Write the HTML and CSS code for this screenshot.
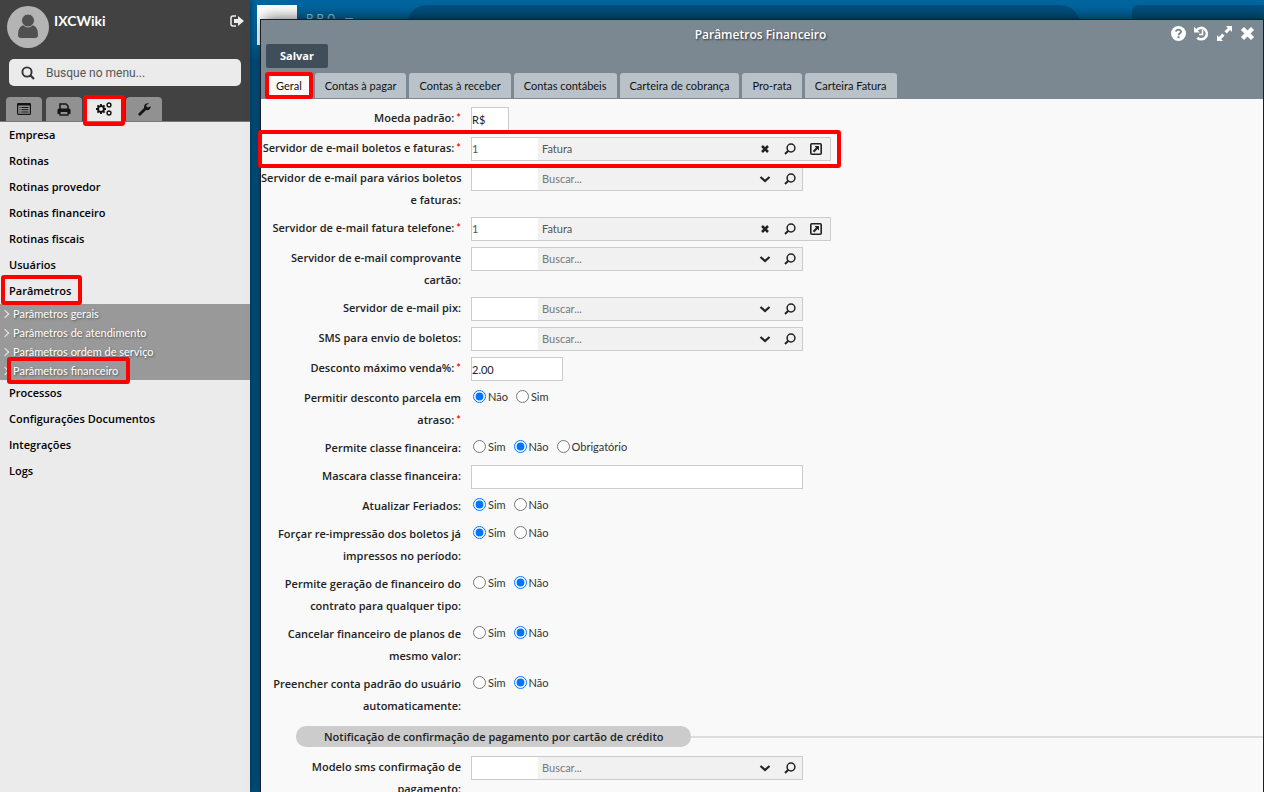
FILE: index.html
```html
<!DOCTYPE html>
<html lang="pt-BR">
<head>
<meta charset="utf-8">
<title>Parâmetros Financeiro</title>
<link rel="stylesheet" href="styles.css">
<script src="app.js" defer></script>
</head>
<body>
<svg class="defs" aria-hidden="true">
  <symbol id="i-down" viewBox="0 0 12 12"><path d="M1.500 4l4.500 4 4.500-4" fill="none" stroke="currentColor" stroke-width="2.200"/></symbol>
  <symbol id="i-x" viewBox="0 0 12 12"><path d="M3 3l6 6M9 3l-6 6" fill="none" stroke="currentColor" stroke-width="2.600"/></symbol>
  <symbol id="i-find" viewBox="0 0 12 12"><circle cx="7" cy="5" r="3.900" fill="none" stroke="currentColor" stroke-width="1.500"/><path d="M4.300 7.700L1 11" stroke="currentColor" stroke-width="2"/></symbol>
  <symbol id="i-open" viewBox="0 0 12 12"><rect x=".8" y=".8" width="10.400" height="10.400" rx="1" fill="none" stroke="currentColor" stroke-width="1.600"/><path d="M4.500 3H9v4.500L7.600 6.100 4.300 9.400 2.800 7.900 6 4.600z" fill="currentColor"/></symbol>
  <symbol id="i-gear" viewBox="0 0 24 24"><circle cx="12" cy="12" r="7" fill="none" stroke="currentColor" stroke-width="4.500"/><path d="M12 0v5M12 19v5M0 12h5M19 12h5M3.500 3.500L7 7M17 17l3.500 3.500M20.500 3.500L17 7M7 17l-3.500 3.500" stroke="currentColor" stroke-width="4.500"/></symbol>
</svg>
<div class="desktop">
  <aside class="sidebar">
    <header class="side-head">
      <div class="profile">
        <svg class="avatar" viewBox="0 0 42 42" aria-hidden="true"><circle cx="21" cy="21" r="21" fill="#b4b4b4"/><path d="M17 19c-5 1-6 6-6 10q0 3 3 3h14q3 0 3-3c0-4-1-9-6-10z" fill="#505050"/><circle cx="21" cy="14.500" r="6.500" fill="#505050" stroke="#b4b4b4"/></svg>
        <strong class="user">IXCWiki</strong>
        <button class="icon-btn" aria-label="Sair"><svg width="14" height="12" viewBox="0 0 14 12"><path d="M6 1H3Q1 1 1 3v6q0 2 2 2h3" fill="none" stroke="#eee" stroke-width="1.500"/><path d="M4 4h4V1l6 5-6 5V8H4z" fill="#eee"/></svg></button>
      </div>
      <label class="search"><svg width="14" height="14" viewBox="0 0 14 14" aria-hidden="true"><circle cx="6" cy="6" r="4.600" fill="none" stroke="#333" stroke-width="1.900"/><path d="M9.300 9.300L13 13" stroke="#333" stroke-width="2.200"/></svg><input type="text" aria-label="Busque no menu" placeholder="Busque no menu..."></label>
      <nav class="side-tabs">
        <button aria-label="Menu"><svg width="14" height="12" viewBox="0 0 14 12"><rect x=".6" y=".6" width="12.800" height="10.800" rx="1" fill="none" stroke="#151515" stroke-width="1.200"/><path d="M0 1.500h14" stroke="#151515" stroke-width="2"/><path d="M2.500 4.500h1M2.500 6.700h1M2.500 9h1M4.500 4.500h7M4.500 6.700h7M4.500 9h7" stroke="#151515"/></svg></button>
        <button aria-label="Imprimir"><svg width="14" height="13" viewBox="0 0 14 13"><path d="M3 6V1h6l2 2v3" fill="none" stroke="#151515" stroke-width="1.500"/><path d="M2 5.500h10q1.500 0 1.500 1.500v4H11V9H3v2H.5V7Q.5 5.500 2 5.500z" fill="#151515"/><path d="M3 9v3h8V9" fill="none" stroke="#151515" stroke-width="1.300"/></svg></button>
        <button class="active" aria-label="Configurações"><svg width="16" height="14" viewBox="0 0 16 14"><use href="#i-gear" x="0" y="2" width="10" height="10"/><use href="#i-gear" x="10" y="0" width="6" height="6"/><use href="#i-gear" x="10" y="8" width="6" height="6"/></svg><span class="mark"></span></button>
        <button aria-label="Ferramentas"><svg width="13" height="13" viewBox="0 0 13 13"><path d="M1.800 11.200L7.500 5.500" stroke="#151515" stroke-width="2.800" stroke-linecap="round"/><path d="M12.500 3.200L10 4.600 8.400 3.600V2L11 .4C8.500-.4 6 1.200 6 3.800s2 3.700 3.800 3.400c2-.3 3.200-2 2.700-4z" fill="#151515"/></svg></button>
      </nav>
    </header>
    <ul class="menu">
      <li><a href="#">Empresa</a></li>
      <li><a href="#">Rotinas</a></li>
      <li><a href="#">Rotinas provedor</a></li>
      <li><a href="#">Rotinas financeiro</a></li>
      <li><a href="#">Rotinas fiscais</a></li>
      <li><a href="#">Usuários</a></li>
      <li><a href="#" class="marked">Parâmetros<span class="mark"></span></a>
        <ul class="submenu">
          <li><a href="#">Parâmetros gerais</a></li>
          <li><a href="#">Parâmetros de atendimento</a></li>
          <li><a href="#">Parâmetros ordem de serviço</a></li>
          <li><a href="#" class="marked">Parâmetros financeiro<span class="mark"></span></a></li>
        </ul>
      </li>
      <li><a href="#">Processos</a></li>
      <li><a href="#">Configurações Documentos</a></li>
      <li><a href="#">Integrações</a></li>
      <li><a href="#">Logs</a></li>
    </ul>
  </aside>
  <div class="workspace">
    <div class="backdrop"><div class="logo"></div><div class="brand">BBO —</div><div class="panel wide"></div><div class="panel side"></div></div>
    <section class="window">
      <header class="win-head">
        <div class="title-bar">
          <h1>Parâmetros Financeiro</h1>
          <div class="win-actions">
            <button class="icon-btn" aria-label="Ajuda"><svg width="15" height="15" viewBox="0 0 15 15"><circle cx="7.500" cy="7.500" r="7.500" fill="#fff"/><path d="M5 5.600Q5.300 3.700 7.500 3.700T10 5.700C10 7.200 7.600 7.200 7.600 9.200" fill="none" stroke="#7b8891" stroke-width="1.900"/><rect x="6.600" y="10.200" width="2" height="2" fill="#7b8891"/></svg></button>
            <button class="icon-btn" aria-label="Histórico"><svg width="15" height="15" viewBox="0 0 15 15"><path d="M2.600 4.200A5.700 5.700 0 1 1 3.300 11.800" fill="none" stroke="#fff" stroke-width="2.600"/><path d="M0 .8L0 6.500h5.800z" fill="#fff"/><path d="M8.500 4v4.500H5" fill="none" stroke="#fff" stroke-width="1.600"/></svg></button>
            <button class="icon-btn" aria-label="Maximizar"><svg width="15" height="15" viewBox="0 0 15 15"><path d="M9 0h6v6l-1.900-1.900-3.400 3.400-2.200-2.200 3.400-3.400zM6 15H0V9l1.900 1.900 3.400-3.400 2.200 2.200-3.400 3.400z" fill="#fff"/></svg></button>
            <button class="icon-btn" aria-label="Fechar"><svg width="15" height="15" viewBox="0 0 15 15"><path d="M4 4l7 7M11 4l-7 7" stroke="#fff" stroke-width="4.400" stroke-linecap="square"/></svg></button>
          </div>
        </div>
        <button class="save">Salvar</button>
        <nav class="tabs">
          <button class="active">Geral<span class="mark"></span></button>
          <button>Contas à pagar</button>
          <button>Contas à receber</button>
          <button>Contas contábeis</button>
          <button>Carteira de cobrança</button>
          <button>Pro-rata</button>
          <button>Carteira Fatura</button>
        </nav>
      </header>
      <form class="form">
        <div class="row"><label for="moeda">Moeda padrão:<em>*</em></label><input id="moeda" class="text short" type="text" value="R$"></div>
        <div class="row marked"><label for="srv-boleto">Servidor de e-mail boletos e faturas:<em>*</em></label><div class="lookup" data-id="srv-boleto" data-code="1" data-text="Fatura"></div><span class="mark"></span></div>
        <div class="row"><label for="srv-varios">Servidor de e-mail para vários boletos<br>e faturas:</label><div class="lookup" data-id="srv-varios"></div></div>
        <div class="row"><label for="srv-tel">Servidor de e-mail fatura telefone:<em>*</em></label><div class="lookup" data-id="srv-tel" data-code="1" data-text="Fatura"></div></div>
        <div class="row"><label for="srv-cartao">Servidor de e-mail comprovante<br>cartão:</label><div class="lookup" data-id="srv-cartao"></div></div>
        <div class="row"><label for="srv-pix">Servidor de e-mail pix:</label><div class="lookup" data-id="srv-pix"></div></div>
        <div class="row"><label for="sms">SMS para envio de boletos:</label><div class="lookup" data-id="sms"></div></div>
        <div class="row"><label for="desconto">Desconto máximo venda%:<em>*</em></label><input id="desconto" class="text medium" type="text" value="2.00"></div>
        <div class="row" role="radiogroup" aria-labelledby="l1"><span class="label" id="l1">Permitir desconto parcela em<br>atraso:<em>*</em></span><div class="radios"><label><input type="radio" name="r1" checked>Não</label><label><input type="radio" name="r1">Sim</label></div></div>
        <div class="row" role="radiogroup" aria-labelledby="l2"><span class="label" id="l2">Permite classe financeira:</span><div class="radios"><label><input type="radio" name="r2">Sim</label><label><input type="radio" name="r2" checked>Não</label><label><input type="radio" name="r2">Obrigatório</label></div></div>
        <div class="row"><label for="mascara">Mascara classe financeira:</label><input id="mascara" class="text long" type="text"></div>
        <div class="row" role="radiogroup" aria-labelledby="l3"><span class="label" id="l3">Atualizar Feriados:</span><div class="radios"><label><input type="radio" name="r3" checked>Sim</label><label><input type="radio" name="r3">Não</label></div></div>
        <div class="row" role="radiogroup" aria-labelledby="l4"><span class="label" id="l4">Forçar re-impressão dos boletos já<br>impressos no período:</span><div class="radios"><label><input type="radio" name="r4" checked>Sim</label><label><input type="radio" name="r4">Não</label></div></div>
        <div class="row" role="radiogroup" aria-labelledby="l5"><span class="label" id="l5">Permite geração de financeiro do<br>contrato para qualquer tipo:</span><div class="radios"><label><input type="radio" name="r5">Sim</label><label><input type="radio" name="r5" checked>Não</label></div></div>
        <div class="row" role="radiogroup" aria-labelledby="l6"><span class="label" id="l6">Cancelar financeiro de planos de<br>mesmo valor:</span><div class="radios"><label><input type="radio" name="r6">Sim</label><label><input type="radio" name="r6" checked>Não</label></div></div>
        <div class="row" role="radiogroup" aria-labelledby="l7"><span class="label" id="l7">Preencher conta padrão do usuário<br>automaticamente:</span><div class="radios"><label><input type="radio" name="r7">Sim</label><label><input type="radio" name="r7" checked>Não</label></div></div>
        <h2 class="section"><span>Notificação de confirmação de pagamento por cartão de crédito</span></h2>
        <div class="row"><label for="modelo">Modelo sms confirmação de<br>pagamento:</label><div class="lookup" data-id="modelo"></div></div>
      </form>
    </section>
  </div>
</div>
</body>
</html>
```
FILE: app.js
```js
// Builds each lookup field: code box, description box and action buttons.
const button = (label, icon) =>
  `<button type="button" aria-label="${label}"><svg class="${icon}" aria-hidden="true"><use href="#${icon}"/></svg></button>`;

document.querySelectorAll('.lookup').forEach((el) => {
  const { id, code = '', text = '' } = el.dataset;
  el.innerHTML =
    `<input class="code" id="${id}" type="text" value="${code}">` +
    `<input class="desc" type="text" aria-label="Descrição" placeholder="Buscar..." value="${text}">` +
    (code ? button('Limpar', 'i-x') : button('Abrir lista', 'i-down')) +
    button('Pesquisar', 'i-find') +
    (code ? button('Abrir cadastro', 'i-open') : '');
  if (code) el.classList.add('filled');
});
```
FILE: styles.css
```css
* { box-sizing: border-box; }
body {
  margin: 0;
  font: 11px/22px Lato, "Noto Sans", sans-serif;
  color: #222;
}
button, input { font: inherit; color: inherit; }
button { border: 0; padding: 0; background: none; }
ul { list-style: none; margin: 0; padding: 0; }
a { color: inherit; text-decoration: none; }
svg { display: block; }
.defs { display: none; }

.desktop {
  display: flex;
  height: 100vh;
  overflow: hidden;
  background: linear-gradient(#00659e, #00659e 40px, #00507f 60px);
}

/* Strong text */
.menu, .title-bar h1, .row > label, .label, .section {
  font-family: "Open Sans", "Noto Sans", sans-serif;
  font-weight: 600;
}
.save { font-family: "Open Sans", "Noto Sans", sans-serif; font-weight: 700; }

/* Red highlight frames */
.mark {
  position: absolute;
  border: 4px solid #f00;
  border-radius: 3px;
  pointer-events: none;
  z-index: 5;
}

/* Sidebar */
.sidebar {
  flex: 0 0 250px;
  background: #ebebeb;
  box-shadow: 0 0 6px #002a45;
  z-index: 1;
}
.side-head {
  padding: 6px 6px 0;
  background: #424242;
  border-bottom: 1px solid #777;
}
.profile { display: flex; align-items: flex-start; gap: 5px; padding: 0 0 11px 1px; }
.avatar { width: 42px; height: 42px; }
.user { flex: 1; font-size: 14px; line-height: 30px; color: #fff; }
.profile .icon-btn { margin-top: 9px; }
.search {
  display: flex;
  align-items: center;
  gap: 11px;
  height: 27px;
  margin: 0 3px 11px;
  padding: 0 12px;
  border-radius: 5px;
  background: #ebebeb;
}
.search input {
  flex: 1;
  min-width: 0;
  border: 0;
  padding: 0;
  background: none;
  outline: 0;
  font-family: Roboto, sans-serif;
  font-size: 12px;
  color: #444;
}
.search input::placeholder { color: #555; opacity: 1; }
.side-tabs { display: flex; gap: 4px; }
.side-tabs button {
  position: relative;
  display: grid;
  place-items: center;
  width: 36px;
  height: 24px;
  border-radius: 4px 4px 0 0;
  background: #919191;
  color: #111;
}
.side-tabs .active { background: #ebebeb; }
.side-tabs .mark { inset: -2px -3px -5px; }
.menu { color: #000; }
.menu a { display: block; padding-left: 9px; line-height: 26px; }
.menu .marked { position: relative; width: max-content; }
.menu .marked .mark { inset: -3px -11px -1px 1px; }
.menu .submenu { background: #999; color: #fff; font-family: Lato, sans-serif; font-weight: 400; text-shadow: 1px 1px 2px #555; }
.menu .submenu a { padding-left: 13px; line-height: 19px; }
.submenu li { position: relative; }
.submenu li::before {
  content: "";
  position: absolute;
  left: 2px;
  top: 7px;
  width: 5px;
  height: 5px;
  border: solid #eee;
  border-width: 1px 1px 0 0;
  transform: rotate(45deg);
}
.menu .submenu .marked .mark { inset: -4px -12px -4px 7px; }

/* Desktop behind the window */
.workspace { position: relative; flex: 1; min-width: 0; padding: 19px 0 0 10px; display: flex; z-index: 2; }
.backdrop { position: absolute; inset: 5px 0 0 7px; display: flex; }
.logo { width: 40px; height: 40px; background: #fff; }
.brand { width: 110px; padding: 3px 0 0 9px; font-family: Roboto, sans-serif; font-size: 12px; letter-spacing: 3px; color: #9cc; }
.panel { background: #00507f; height: 400px; }
.wide { flex: 1; border-radius: 20px; margin-right: 52px; }
.side { width: 132px; border-radius: 6px 0 0; }

/* Window */
.window {
  position: relative;
  flex: 1;
  min-width: 0;
  display: flex;
  flex-direction: column;
  border: 1px solid #17202a;
  border-bottom: 0;
  background: #f9f9f9;
  box-shadow: 4px 0 14px #000a;
}
.win-head { background: #7b8891; padding: 0 5px; }
.title-bar { display: grid; grid-template-columns: 1fr auto 1fr; height: 24px; padding: 4px 3px 0 0; }
.title-bar h1 { grid-column: 2; margin: 0; font-size: 12px; line-height: 22px; color: #fff; text-shadow: 1px 1px 2px #333; }
.win-actions { display: flex; gap: 8px; justify-content: flex-end; align-items: flex-start; padding-top: 2px; }
.save { display: block; width: 62px; height: 24px; margin-bottom: 5px; border-radius: 2px; background: #3f4e59; color: #fff; }
.tabs { display: flex; gap: 3px; padding-bottom: 1px; }
.tabs button { position: relative; height: 25px; padding: 0 10px; border-radius: 3px 3px 0 0; background: #bac2c9; color: #111; white-space: nowrap; }
.tabs .active { background: #f9f9f9; }
.tabs .mark { inset: -1px -1px; }

/* Form */
.form { flex: 1; min-height: 0; padding-top: 8px; }
.row { position: relative; display: flex; align-items: flex-start; gap: 10px; margin-bottom: 6px; }
.row > label, .label { width: 200px; flex: none; text-align: right; white-space: nowrap; }
em { margin-left: 2px; font-family: Lato, sans-serif; font-style: normal; color: #e00; }
.text, .lookup { height: 24px; border: 1px solid #ccc; background: #fff; }
.text { padding: 0; }
.short { width: 38px; }
.medium { width: 92px; }
.long { width: 332px; }
.lookup { display: flex; width: 332px; background: #f1f1f1; }
.filled { width: 360px; }
.lookup input { border: 0; min-width: 0; outline: 0; color: #555; padding: 0; }
.lookup .code { width: 66px; background: #fff; }
.lookup .desc { flex: 1; background: none; padding-left: 4px; }
.desc::placeholder { color: #777; opacity: 1; }
.lookup button { width: 25px; display: grid; place-items: center; color: #222; }
.lookup svg { width: 12px; height: 12px; }
.filled button:last-child { width: 27px; margin-right: 1px; }
.radios { display: flex; gap: 6px; }
.radios label { display: flex; align-items: flex-start; gap: 2px; line-height: 20px; color: #333; }
.radios input { width: 13px; height: 13px; margin: 3px 0 0 2px; accent-color: #0075ff; }
.row .mark { left: -3px; top: -7px; width: 583px; height: 38px; }
.section { display: flex; align-items: center; margin: 9px 0 9px 35px; font-size: 11px; line-height: 21px; }
.section span { padding: 0 28px; border-radius: 10px; background: #ccc; white-space: nowrap; }
.section::after { content: ""; flex: 1; height: 2px; background: #ddd; }
```
